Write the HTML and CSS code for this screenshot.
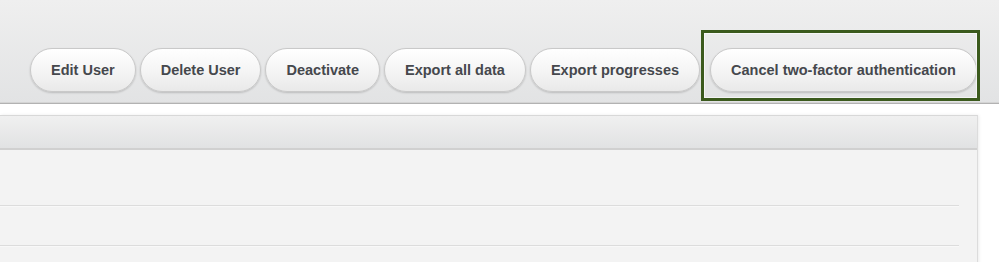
FILE: index.html
```html
<!DOCTYPE html>
<html lang="en">
<head>
    <meta charset="UTF-8">
    <meta name="viewport" content="width=device-width, initial-scale=1.0">
    <title>User actions</title>
    <link rel="stylesheet" href="styles.css">
</head>
<body>
    <div class="toolbar">
        <button class="btn">Edit User</button>
        <button class="btn">Delete User</button>
        <button class="btn">Deactivate</button>
        <button class="btn">Export all data</button>
        <button class="btn">Export progresses</button>
        <span class="highlight">
            <button class="btn">Cancel two-factor authentication</button>
        </span>
    </div>

    <div class="panel">
        <div class="panel-head"></div>
        <div class="panel-body">
            <div class="row first"></div>
            <div class="row"></div>
            <div class="row"></div>
        </div>
    </div>
</body>
</html>
```

FILE: styles.css
```css
body {
    margin: 0;
    background: #fff;
    font-family: "Liberation Sans", Arial, sans-serif;
    overflow: hidden;
}
.toolbar {
    display: flex;
    align-items: flex-end;
    gap: 4px;
    height: 104px;
    box-sizing: border-box;
    padding: 0 0 11px 30px;
    background: linear-gradient(#efefef, #e2e3e4);
    border-bottom: 1px solid #b2b2b2;
    box-shadow: inset 0 -1px 0 #d4d4d4;
}
.btn {
    height: 44px;
    padding: 0 20px;
    border: 1px solid #c9c9c9;
    border-radius: 22px;
    background: linear-gradient(#ffffff, #f4f4f4 55%, #e9e9e9);
    box-shadow: 0 1px 2px rgba(0,0,0,0.18);
    color: #45484d;
    font-family: inherit;
    font-size: 14.5px;
    font-weight: bold;
    cursor: pointer;
    white-space: nowrap;
}
.highlight {
    position: relative;
    display: flex;
    margin-left: 6px;
}
.highlight::after {
    content: "";
    position: absolute;
    left: -9px;
    right: -3px;
    top: -18px;
    bottom: -9px;
    border: 3px solid #3b5a1d;
    box-shadow: inset 0 0 0 1px rgba(255,255,255,0.6);
    pointer-events: none;
}

.panel {
    width: 978px;
    margin-top: 11px;
    border-top: 1px solid #d8d8d8;
    border-right: 1px solid #dcdcdc;
    box-sizing: border-box;
    box-shadow: 1px 0 3px rgba(0,0,0,0.08);
}
.panel-head {
    height: 32px;
    background: linear-gradient(#f0f0f0, #e1e2e3);
    border-bottom: 2px solid #d0d0d0;
}
.panel-body {
    background: #f3f3f3;
    height: 200px;
}
.row {
    height: 39px;
    margin-right: 18px;
    border-bottom: 1px solid #dcdcdc;
    box-shadow: 0 1px 0 #f8f8f8;
}
.row.first {
    height: 55px;
}
```
